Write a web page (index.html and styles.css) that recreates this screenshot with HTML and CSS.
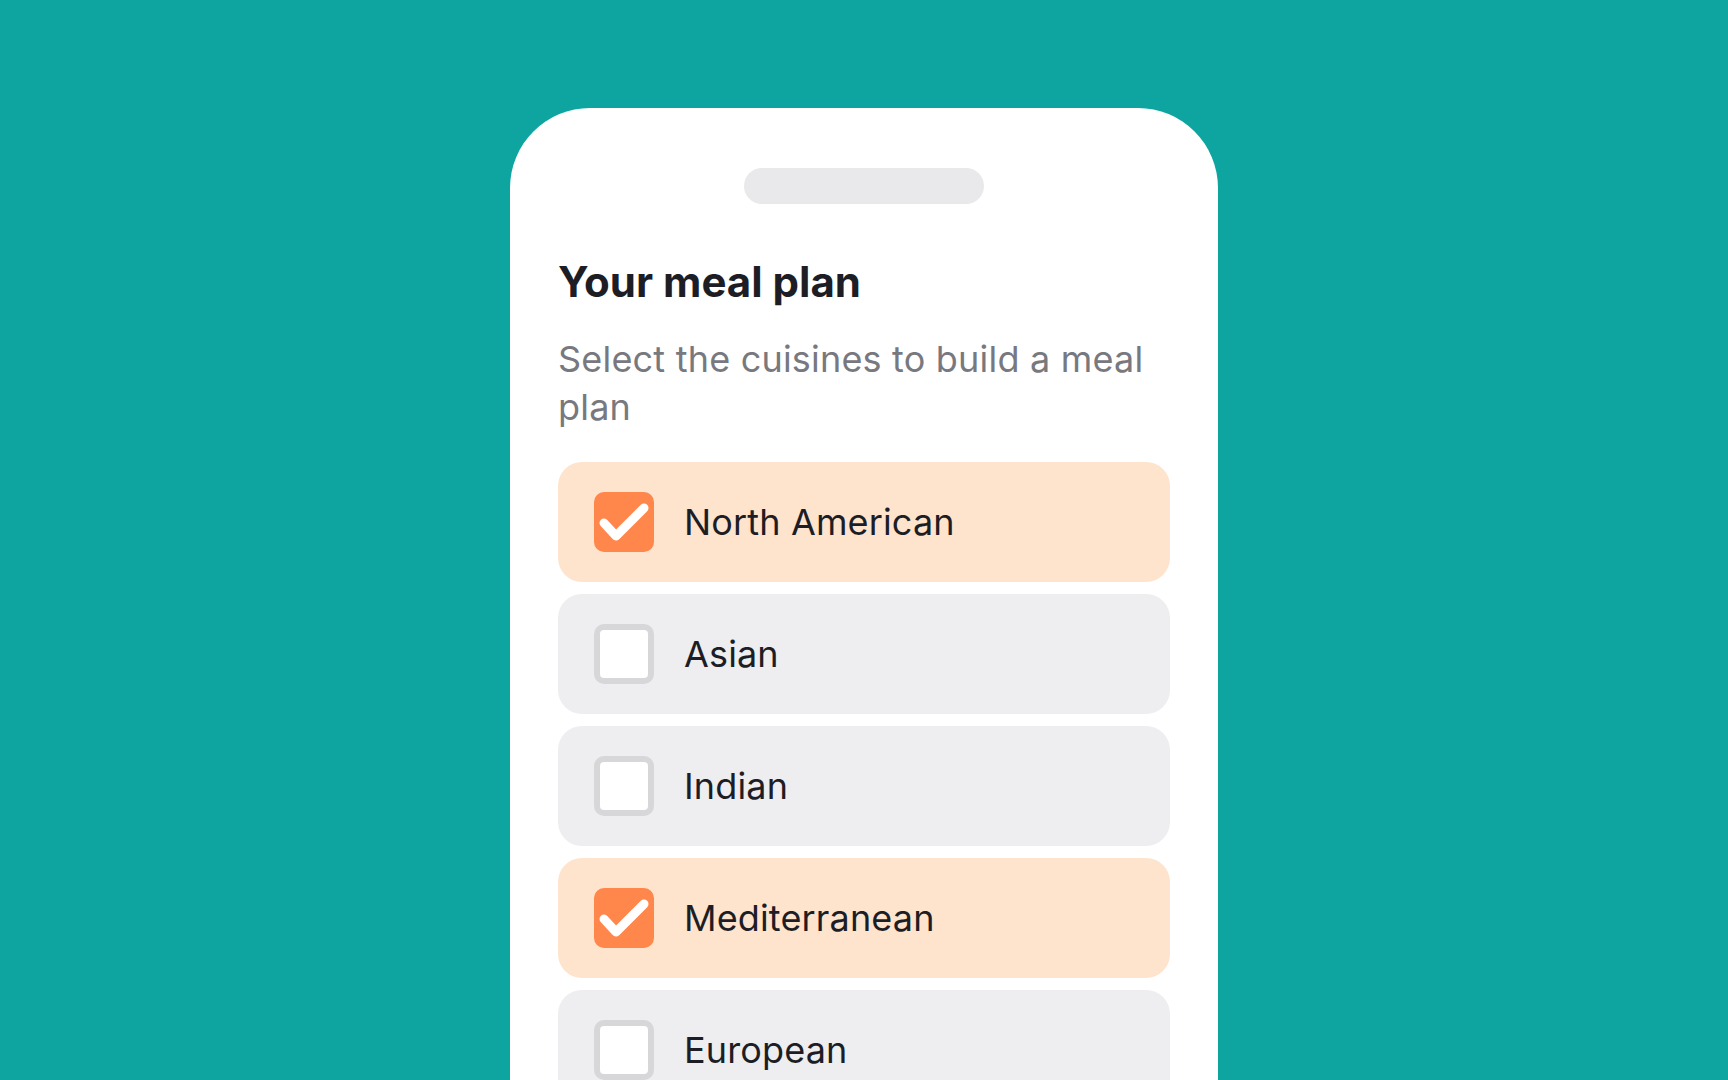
FILE: index.html
```html
<!DOCTYPE html>
<html lang="en">
<head>
    <meta charset="UTF-8">
    <meta name="viewport" content="width=device-width, initial-scale=1.0">
    <title>Your meal plan</title>
    <link rel="stylesheet" href="styles.css">
</head>
<body>
    <div class="stage">
        <div class="phone">
            <div class="notch"></div>

            <h1>Your meal plan</h1>
            <p class="subtitle">Select the cuisines to build a meal plan</p>

            <!-- Cuisine options -->
            <ul class="options">
                <li class="option checked">
                    <span class="box">
                        <svg viewBox="0 0 60 60"><path d="M10 31 L22 44 L50 16"/></svg>
                    </span>
                    <span class="label">North American</span>
                </li>
                <li class="option">
                    <span class="box"></span>
                    <span class="label">Asian</span>
                </li>
                <li class="option">
                    <span class="box"></span>
                    <span class="label">Indian</span>
                </li>
                <li class="option checked">
                    <span class="box">
                        <svg viewBox="0 0 60 60"><path d="M10 31 L22 44 L50 16"/></svg>
                    </span>
                    <span class="label">Mediterranean</span>
                </li>
                <li class="option">
                    <span class="box"></span>
                    <span class="label">European</span>
                </li>
            </ul>
        </div>
    </div>
</body>
</html>
```

FILE: styles.css
```css
body {
    margin: 0;
    height: 100vh;
    overflow: hidden;
    background-color: #0ea5a0;
    font-family: Inter, "Noto Sans", sans-serif;
    color: #1d1d25;
}
.stage {
    display: flex;
    justify-content: center;
    padding-top: 108px;
}
.phone {
    width: 708px;
    min-height: 1000px;
    box-sizing: border-box;
    padding: 60px 48px 0;
    background-color: white;
    border-radius: 80px 80px 0 0;
}
.notch {
    width: 240px;
    height: 36px;
    margin: 0 auto;
    border-radius: 18px;
    background-color: #e9e9eb;
}
h1 {
    margin: 53px 0 0;
    font-size: 42px;
    line-height: 50px;
    font-weight: 700;
}
.subtitle {
    margin: 28px 0 0;
    font-size: 36px;
    line-height: 48px;
    letter-spacing: 0.2px;
    color: #78787f;
}
.options {
    list-style: none;
    margin: 31px 0 0;
    padding: 0;
    display: flex;
    flex-direction: column;
    gap: 12px;
}
.option {
    height: 120px;
    box-sizing: border-box;
    padding: 0 36px;
    display: flex;
    align-items: center;
    gap: 30px;
    border-radius: 24px;
    background-color: #eeeef0;
}
.option.checked {
    background-color: #fee4cd;
}
.box {
    width: 60px;
    height: 60px;
    box-sizing: border-box;
    border: 6px solid #d7d7d9;
    border-radius: 10px;
    background-color: white;
    flex-shrink: 0;
}
.checked .box {
    border: none;
    background-color: #ff874c;
}
.box svg {
    display: block;
    width: 60px;
    height: 60px;
}
.box path {
    fill: none;
    stroke: white;
    stroke-width: 9;
    stroke-linecap: round;
    stroke-linejoin: round;
}
.label {
    font-size: 36px;
    line-height: 44px;
    letter-spacing: 0.15px;
}
```
